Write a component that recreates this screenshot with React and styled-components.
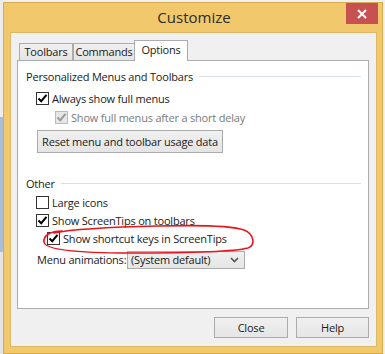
import React from 'react';
import styled, { createGlobalStyle } from 'styled-components';

const GlobalStyle = createGlobalStyle`
  html, body {
    margin: 0;
    padding: 0;
  }
  body {
    width: 385px;
    height: 354px;
    overflow: hidden;
    background-color: #f0f0f0;
    background-image: linear-gradient(to bottom, #ececec 0, #ececec 117px, #a9bcd8 117px, #a9bcd8 252px, #e4e4e4 252px);
    background-size: 3px 100%;
    background-repeat: no-repeat;
    font-family: "Open Sans", "Noto Sans", sans-serif;
    font-size: 11px;
    letter-spacing: -0.2px;
    color: #1a1a1a;
  }
`;

const Frame = styled.div`
  box-sizing: border-box;
  margin: 2px 0 0 3px;
  width: 380px;
  height: 352px;
  border: 1px solid #d8ab4c;
  background: #f1c86b;
  display: flex;
  flex-direction: column;
  padding: 0 5px 6px 6px;
`;

const TitleBar = styled.div`
  height: 29px;
  display: grid;
  grid-template-columns: 1fr auto 1fr;
  align-items: start;
  margin-right: -1px;
`;

const Title = styled.div`
  grid-column: 2;
  font-size: 15px;
  letter-spacing: 0;
  line-height: 29px;
  color: #2b2b2b;
`;

const CloseBox = styled.div`
  grid-column: 3;
  justify-self: end;
  width: 32px;
  height: 21px;
  background: #c75050;
  display: flex;
  align-items: center;
  justify-content: center;
`;

const Client = styled.div`
  flex: 1;
  box-sizing: border-box;
  border: 1px solid #dcb766;
  background: #f0f0f0;
  padding: 7px 7px 8px 6px;
  display: flex;
  flex-direction: column;
`;

const TabRow = styled.div`
  display: flex;
  align-items: flex-end;
  height: 21px;
  padding-left: 2px;
  margin-bottom: -1px;
  position: relative;
  z-index: 1;
`;

const Tab = styled.div`
  box-sizing: border-box;
  width: ${p => p.$w}px;
  height: ${p => (p.$active ? 21 : 18)}px;
  border: 1px solid #acacac;
  border-bottom: ${p => (p.$active ? 'none' : '1px solid #acacac')};
  margin-left: ${p => (p.$active ? -1 : 0)}px;
  background: ${p => (p.$active ? '#ffffff' : 'linear-gradient(#f0f0f0, #e5e5e5)')};
  display: flex;
  justify-content: center;
  align-items: ${p => (p.$active ? 'flex-start' : 'center')};
  padding-top: ${p => (p.$active ? 1 : 0)}px;
  line-height: 16px;
  white-space: nowrap;
  & + & {
    border-left: ${p => (p.$active ? '1px solid #acacac' : 'none')};
  }
`;

const Panel = styled.div`
  position: relative;
  box-sizing: border-box;
  height: 249px;
  border: 1px solid #adadad;
  background: #ffffff;
  padding: 6px 7px 0 8px;
  display: flex;
  flex-direction: column;
`;

const GroupHeader = styled.div`
  display: flex;
  align-items: center;
  height: 16px;
  margin-top: ${p => p.$mt}px;
  gap: 6px;
  white-space: nowrap;
  &::after {
    content: '';
    flex: 1;
    height: 1px;
    background: #d9e0e7;
  }
`;

const CheckRow = styled.div`
  display: flex;
  align-items: center;
  height: 18px;
  margin-top: ${p => p.$mt || 0}px;
  padding-left: ${p => p.$indent}px;
  gap: 3px;
  white-space: nowrap;
  color: ${p => (p.$disabled ? '#7a7a7a' : '#1a1a1a')};
`;

const Box = styled.div`
  box-sizing: border-box;
  width: 13px;
  height: 13px;
  border: 1px solid ${p => (p.$disabled ? '#bcbcbc' : '#333333')};
  background: ${p => (p.$disabled ? '#e6e6e6' : '#ffffff')};
  display: flex;
  align-items: center;
  justify-content: center;
  flex-shrink: 0;
`;

const PushButton = styled.div`
  box-sizing: border-box;
  width: ${p => p.$w}px;
  height: ${p => p.$h || 21}px;
  margin-left: ${p => p.$ml || 0}px;
  margin-top: ${p => p.$mt || 0}px;
  border: 1px solid #acacac;
  background: linear-gradient(#f0f0f0, #e5e5e5);
  display: flex;
  align-items: center;
  justify-content: center;
  white-space: nowrap;
`;

const SelectRow = styled.div`
  display: flex;
  align-items: center;
  height: 19px;
  margin-top: 3px;
  padding-left: 11px;
  white-space: nowrap;
`;

const SelectLabel = styled.div`
  width: 90px;
  flex-shrink: 0;
`;

const Select = styled.div`
  box-sizing: border-box;
  width: 118px;
  height: 18px;
  border: 1px solid #acacac;
  background: linear-gradient(#f0f0f0, #e5e5e5);
  display: flex;
  align-items: center;
  justify-content: space-between;
  padding: 0 5px 0 3px;
`;

const Footer = styled.div`
  display: flex;
  justify-content: flex-end;
  gap: 8px;
  margin-top: 8px;
`;

const Scribble = styled.svg`
  position: absolute;
  left: 0;
  top: 0;
  width: 100%;
  height: 100%;
  overflow: visible;
  pointer-events: none;
`;

const Check = ({ disabled }) => (
  <svg width="11" height="11" viewBox="0 0 11 11">
    <path d="M1.5 5.5 L4.2 8.2 L9.5 1.8" fill="none" stroke={disabled ? '#9a9a9a' : '#000'} strokeWidth="2" />
  </svg>
);

const CheckItem = ({ checked, disabled, indent, mt, children }) => (
  <CheckRow $indent={indent} $mt={mt} $disabled={disabled}>
    <Box $disabled={disabled}>{checked && <Check disabled={disabled} />}</Box>
    <span>{children}</span>
  </CheckRow>
);

export default function App() {
  return (
    <>
      <GlobalStyle />
      <Frame>
        <TitleBar>
          <Title>Customize</Title>
          <CloseBox>
            <svg width="10" height="10" viewBox="0 0 10 10">
              <path d="M1 1 L9 9 M9 1 L1 9" stroke="#fff" strokeWidth="2" />
            </svg>
          </CloseBox>
        </TitleBar>
        <Client>
          <TabRow>
            <Tab $w={54}>Toolbars</Tab>
            <Tab $w={62}>Commands</Tab>
            <Tab $w={54} $active>Options</Tab>
          </TabRow>
          <Panel>
            <GroupHeader $mt={1}>Personalized Menus and Toolbars</GroupHeader>
            <CheckItem checked indent={10} mt={5}>Always show full menus</CheckItem>
            <CheckItem checked disabled indent={29} mt={1}>Show full menus after a short delay</CheckItem>
            <PushButton $w={186} $h={23} $ml={11} $mt={4}>Reset menu and toolbar usage data</PushButton>
            <GroupHeader $mt={22}>Other</GroupHeader>
            <CheckItem indent={10} mt={2}>Large icons</CheckItem>
            <CheckItem checked indent={10}>Show ScreenTips on toolbars</CheckItem>
            <CheckItem checked indent={21}>Show shortcut keys in ScreenTips</CheckItem>
            <SelectRow>
              <SelectLabel>Menu animations:</SelectLabel>
              <Select>
                <span>(System default)</span>
                <svg width="9" height="6" viewBox="0 0 9 6">
                  <path d="M1 1 L4.5 4.5 L8 1" fill="none" stroke="#555" strokeWidth="1.6" />
                </svg>
              </Select>
            </SelectRow>
            <Scribble viewBox="0 0 350 247" preserveAspectRatio="none">
              <path
                d="M44 170 C32 170, 25 175, 26 181 C27 189, 60 192, 112 192 C165 192, 215 191, 230 187 C238 184, 236 173, 226 169 C215 165, 180 164, 140 165 C95 166, 55 168, 36 172"
                fill="none"
                stroke="#e8141b"
                strokeWidth="1.6"
                strokeLinecap="round"
              />
            </Scribble>
          </Panel>
          <Footer>
            <PushButton $w={74}>Close</PushButton>
            <PushButton $w={73}>Help</PushButton>
          </Footer>
        </Client>
      </Frame>
    </>
  );
}
